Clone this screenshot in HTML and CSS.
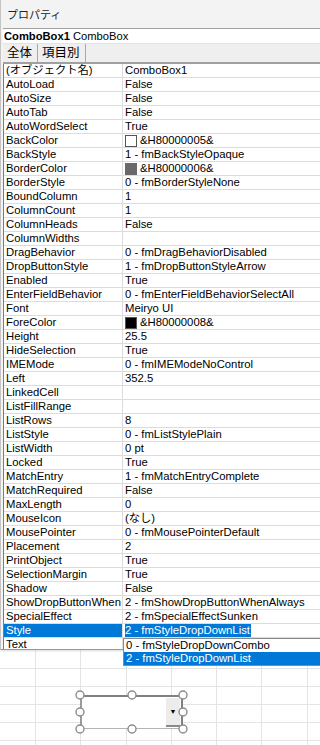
FILE: index.html
```html
<!DOCTYPE html>
<html lang="ja">
<head>
    <meta charset="UTF-8">
    <meta name="viewport" content="width=device-width, initial-scale=1.0">
    <title>プロパティ</title>
    <link rel="stylesheet" href="styles.css">
</head>
<body>
    <div class="window">
        <div class="title">プロパティ</div>
        <div class="objbox"><b>ComboBox1</b> ComboBox</div>
        <div class="tabs">
            <span class="tab">全体</span>
            <span class="tab">項目別</span>
        </div>
        <div class="grid">
            <div class="row"><div class="name">(オブジェクト名)</div><div class="val">ComboBox1</div></div>
            <div class="row"><div class="name">AutoLoad</div><div class="val">False</div></div>
            <div class="row"><div class="name">AutoSize</div><div class="val">False</div></div>
            <div class="row"><div class="name">AutoTab</div><div class="val">False</div></div>
            <div class="row"><div class="name">AutoWordSelect</div><div class="val">True</div></div>
            <div class="row"><div class="name">BackColor</div><div class="val"><i class="swatch white"></i>&amp;H80000005&amp;</div></div>
            <div class="row"><div class="name">BackStyle</div><div class="val">1 - fmBackStyleOpaque</div></div>
            <div class="row"><div class="name">BorderColor</div><div class="val"><i class="swatch gray"></i>&amp;H80000006&amp;</div></div>
            <div class="row"><div class="name">BorderStyle</div><div class="val">0 - fmBorderStyleNone</div></div>
            <div class="row"><div class="name">BoundColumn</div><div class="val">1</div></div>
            <div class="row"><div class="name">ColumnCount</div><div class="val">1</div></div>
            <div class="row"><div class="name">ColumnHeads</div><div class="val">False</div></div>
            <div class="row"><div class="name">ColumnWidths</div><div class="val"></div></div>
            <div class="row"><div class="name">DragBehavior</div><div class="val">0 - fmDragBehaviorDisabled</div></div>
            <div class="row"><div class="name">DropButtonStyle</div><div class="val">1 - fmDropButtonStyleArrow</div></div>
            <div class="row"><div class="name">Enabled</div><div class="val">True</div></div>
            <div class="row"><div class="name">EnterFieldBehavior</div><div class="val">0 - fmEnterFieldBehaviorSelectAll</div></div>
            <div class="row"><div class="name">Font</div><div class="val">Meiryo UI</div></div>
            <div class="row"><div class="name">ForeColor</div><div class="val"><i class="swatch black"></i>&amp;H80000008&amp;</div></div>
            <div class="row"><div class="name">Height</div><div class="val">25.5</div></div>
            <div class="row"><div class="name">HideSelection</div><div class="val">True</div></div>
            <div class="row"><div class="name">IMEMode</div><div class="val">0 - fmIMEModeNoControl</div></div>
            <div class="row"><div class="name">Left</div><div class="val">352.5</div></div>
            <div class="row"><div class="name">LinkedCell</div><div class="val"></div></div>
            <div class="row"><div class="name">ListFillRange</div><div class="val"></div></div>
            <div class="row"><div class="name">ListRows</div><div class="val">8</div></div>
            <div class="row"><div class="name">ListStyle</div><div class="val">0 - fmListStylePlain</div></div>
            <div class="row"><div class="name">ListWidth</div><div class="val">0 pt</div></div>
            <div class="row"><div class="name">Locked</div><div class="val">True</div></div>
            <div class="row"><div class="name">MatchEntry</div><div class="val">1 - fmMatchEntryComplete</div></div>
            <div class="row"><div class="name">MatchRequired</div><div class="val">False</div></div>
            <div class="row"><div class="name">MaxLength</div><div class="val">0</div></div>
            <div class="row"><div class="name">MouseIcon</div><div class="val">(なし)</div></div>
            <div class="row"><div class="name">MousePointer</div><div class="val">0 - fmMousePointerDefault</div></div>
            <div class="row"><div class="name">Placement</div><div class="val">2</div></div>
            <div class="row"><div class="name">PrintObject</div><div class="val">True</div></div>
            <div class="row"><div class="name">SelectionMargin</div><div class="val">True</div></div>
            <div class="row"><div class="name">Shadow</div><div class="val">False</div></div>
            <div class="row"><div class="name">ShowDropButtonWhen</div><div class="val">2 - fmShowDropButtonWhenAlways</div></div>
            <div class="row"><div class="name">SpecialEffect</div><div class="val">2 - fmSpecialEffectSunken</div></div>
            <div class="row selected"><div class="name">Style</div><div class="val"><span class="hl">2 - fmStyleDropDownList</span></div></div>
            <div class="row"><div class="name">Text</div><div class="val"></div></div>
        </div>
    </div>

    <!-- dropdown list opened from the Style value -->
    <div class="dropdown">
        <div class="item">0 - fmStyleDropDownCombo</div>
        <div class="item active">2 - fmStyleDropDownList</div>
    </div>

    <div class="sheet">
        <div class="shape">
            <div class="combo">
                <div class="dropbtn">&#9660;</div>
            </div>
            <svg class="handles" width="113" height="44" viewBox="0 0 113 44">
                <g fill="#fff" stroke="#8c8c8c" stroke-width="1.4">
                    <circle cx="5" cy="5" r="4"/>
                    <circle cx="57" cy="5" r="4"/>
                    <circle cx="108" cy="5" r="4"/>
                    <circle cx="5" cy="22" r="4"/>
                    <circle cx="108" cy="22" r="4"/>
                    <circle cx="5" cy="39" r="4"/>
                    <circle cx="57" cy="39" r="4"/>
                    <circle cx="108" cy="39" r="4"/>
                </g>
            </svg>
        </div>
    </div>
</body>
</html>
```

FILE: styles.css
```css
body {
    margin: 0;
    background-color: #fff;
    font-family: "Liberation Sans", "Noto Sans CJK JP", sans-serif;
    font-size: 11.3px;
    color: #000;
    width: 320px;
    overflow: hidden;
}
.window {
    background-color: #f3f3f3;
    border-left: 1px solid #c4c4c4;
    padding-left: 2px;
    height: 650px;
    box-sizing: border-box;
    border-bottom: 1px solid #9a9a9a;
    box-shadow: 0 1px 2px rgba(0,0,0,0.15);
    position: relative;
    z-index: 1;
    overflow: hidden;
}
.title {
    height: 28px;
    line-height: 31px;
    padding-left: 4px;
    color: #222;
    font-size: 11px;
}
.objbox {
    background-color: #fff;
    border-top: 1px solid #a3a3a3;
    height: 14px;
    line-height: 14px;
    padding-left: 1px;
    border-bottom: 1px solid #e4e4e4;
    white-space: nowrap;
    font-size: 11.2px;
}
.tabs {
    height: 18px;
    background-color: #efefef;
    border-bottom: 2px solid #a0a0a0;
    display: flex;
    align-items: stretch;
    font-size: 12.5px;
    white-space: nowrap;
}
.tab {
    padding: 0 5px 0 4px;
    line-height: 19px;
    border-right: 1px solid #a8a8a8;
}
.grid {
    border-left: 1px solid #7c7c7c;
    background-color: #fff;
}
.row {
    display: grid;
    grid-template-columns: 119px 1fr;
    height: 14px;
    box-sizing: border-box;
    border-bottom: 1px solid #dcdcdc;
    line-height: 13px;
    white-space: nowrap;
}
.name {
    padding-left: 2px;
    border-right: 1px solid #dcdcdc;
    overflow: hidden;
}
.val {
    padding-left: 2px;
    display: flex;
    align-items: center;
    overflow: hidden;
}
.swatch {
    display: inline-block;
    width: 10px;
    height: 10px;
    margin-right: 3px;
    border: 1px solid #555;
}
.swatch.white { background-color: #fff; }
.swatch.gray { background-color: #696969; border-color: #696969; }
.swatch.black { background-color: #000; }
.row.selected .name {
    background-color: #0078d7;
    color: #fff;
}
.hl {
    background-color: #0078d7;
    color: #fff;
    padding-right: 1px;
}
/* open dropdown */
.dropdown {
    position: absolute;
    left: 123px;
    top: 638px;
    width: 197px;
    background-color: #fff;
    border: 1px solid #8a8a8a;
    border-right: none;
    z-index: 2;
}
.item {
    height: 13px;
    line-height: 13px;
    padding-left: 2px;
    white-space: nowrap;
}
.item.active {
    background-color: #0078d7;
    color: #fff;
}
/* worksheet */
.sheet {
    position: relative;
    height: 95px;
    background-color: #fff;
    background-image:
        repeating-linear-gradient(to right, transparent 0, transparent 34px, #e4e4e4 34px, #e4e4e4 35px, transparent 35px, transparent 45.3px),
        repeating-linear-gradient(to bottom, transparent 0, transparent 17px, #e4e4e4 17px, #e4e4e4 18px);
    background-position: 1px 0, 0 1px;
}
.shape {
    position: absolute;
    left: 75px;
    top: 40px;
    width: 113px;
    height: 44px;
}
.combo {
    position: absolute;
    left: 5px;
    top: 5px;
    width: 103px;
    height: 34px;
    box-sizing: border-box;
    background-color: #fff;
    border-top: 2px solid #808080;
    border-left: 2px solid #9a9a9a;
    border-right: 2px solid #808080;
    border-bottom: 1px solid #b4b4b4;
}
.dropbtn {
    position: absolute;
    right: 1px;
    top: 1px;
    bottom: 1px;
    width: 14px;
    background-color: #ececec;
    border-bottom: 2px solid #8a8a8a;
    font-size: 7px;
    line-height: 28px;
    text-align: center;
}
.handles {
    position: absolute;
    left: 0;
    top: 0;
}
```
